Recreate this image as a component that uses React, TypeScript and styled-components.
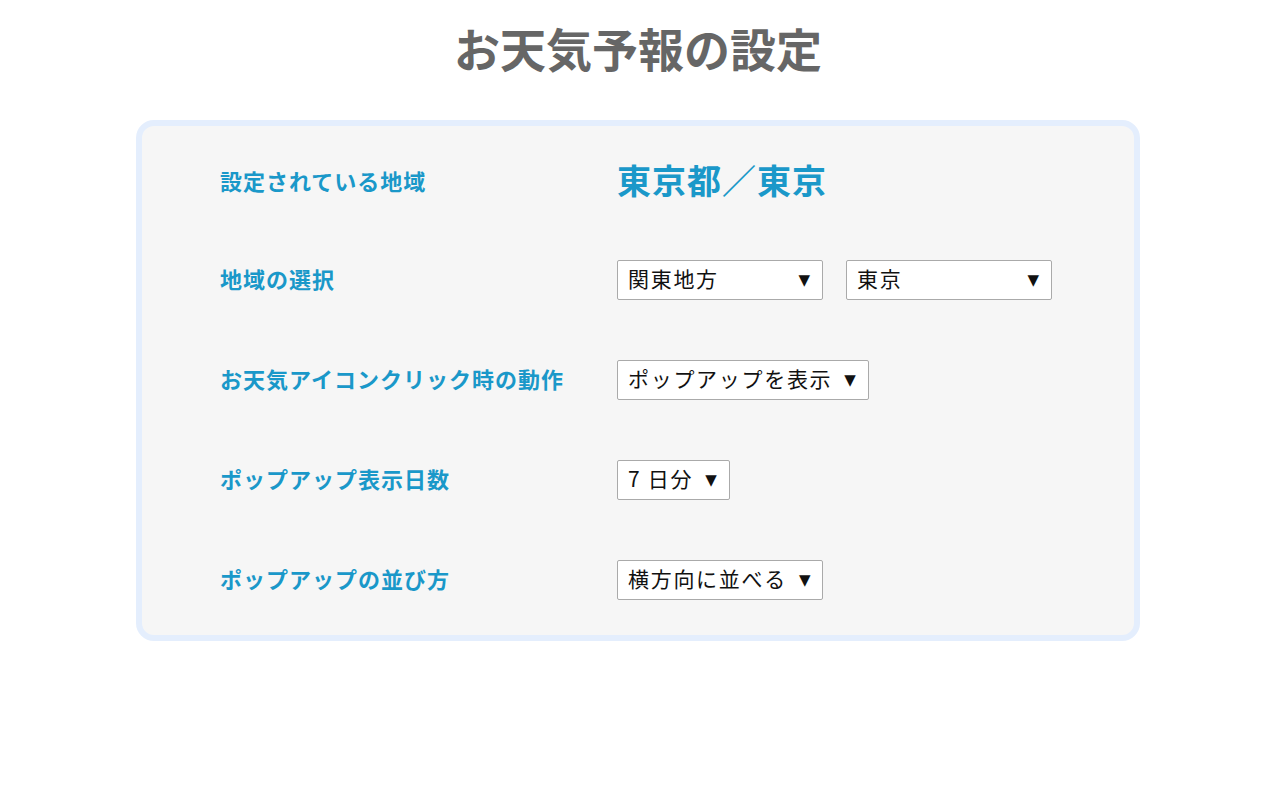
import styled, { createGlobalStyle } from "styled-components";

const GlobalStyle = createGlobalStyle`
  body {
    margin: 0;
    background: #ffffff;
    font-family: "Noto Sans CJK JP", "Noto Sans", sans-serif;
  }
`;

type Row = {
  label: string;
  value?: string;
  selects?: { text: string; width?: number }[];
};

const rows: Row[] = [
  { label: "設定されている地域", value: "東京都／東京" },
  {
    label: "地域の選択",
    selects: [
      { text: "関東地方", width: 206 },
      { text: "東京", width: 206 },
    ],
  },
  { label: "お天気アイコンクリック時の動作", selects: [{ text: "ポップアップを表示" }] },
  { label: "ポップアップ表示日数", selects: [{ text: "7 日分" }] },
  { label: "ポップアップの並び方", selects: [{ text: "横方向に並べる" }] },
];

export default function App() {
  return (
    <>
      <GlobalStyle />
      <Page>
        <Title>お天気予報の設定</Title>
        <Panel>
          {rows.map((row, idx) => (
            <SettingRow key={"row" + idx}>
              <Label>{row.label}</Label>
              <Field>
                {row.value && <Value>{row.value}</Value>}
                {row.selects &&
                  row.selects.map((s, i) => (
                    <Select key={"sel" + i} $width={s.width}>
                      <SelectText>{s.text}</SelectText>
                      <Arrow>▼</Arrow>
                    </Select>
                  ))}
              </Field>
            </SettingRow>
          ))}
        </Panel>
      </Page>
    </>
  );
}

const Page = styled.div`
  width: 1276px;
  display: flex;
  flex-direction: column;
  align-items: center;
`;

const Title = styled.h1`
  margin: 17px 0 43px;
  font-size: 46px;
  line-height: 60px;
  font-weight: 700;
  color: #666666;
`;

const Panel = styled.div`
  box-sizing: border-box;
  width: 1004px;
  background: #f6f6f6;
  border: 6px solid #e4eefd;
  border-radius: 18px;
  padding: 34px 0 35px 78px;
  display: flex;
  flex-direction: column;
  gap: 60px;
`;

const SettingRow = styled.div`
  display: grid;
  grid-template-columns: 397px 1fr;
  align-items: center;
  height: 40px;
`;

const Label = styled.div`
  font-size: 22px;
  font-weight: 700;
  letter-spacing: 1px;
  color: #1a98c9;
  margin-bottom: 5px;
`;

const Field = styled.div`
  display: flex;
  align-items: center;
  gap: 23px;
`;

const Value = styled.div`
  font-size: 34px;
  font-weight: 700;
  letter-spacing: 1px;
  color: #1a98c9;
  line-height: 40px;
  margin-bottom: 4px;
`;

const Select = styled.div<{ $width?: number }>`
  box-sizing: border-box;
  height: 40px;
  width: ${(props) => (props.$width ? props.$width + "px" : "auto")};
  display: flex;
  align-items: center;
  justify-content: space-between;
  gap: 12px;
  padding: 0 12px 4px 10px;
  background: #ffffff;
  border: 1px solid #aaaaaa;
  border-radius: 2px;
  color: #111111;
`;

const SelectText = styled.span`
  font-size: 21px;
  letter-spacing: 1.7px;
`;

const Arrow = styled.span`
  font-family: "DejaVu Sans", sans-serif;
  font-size: 15px;
  margin-top: 3px;
`;
